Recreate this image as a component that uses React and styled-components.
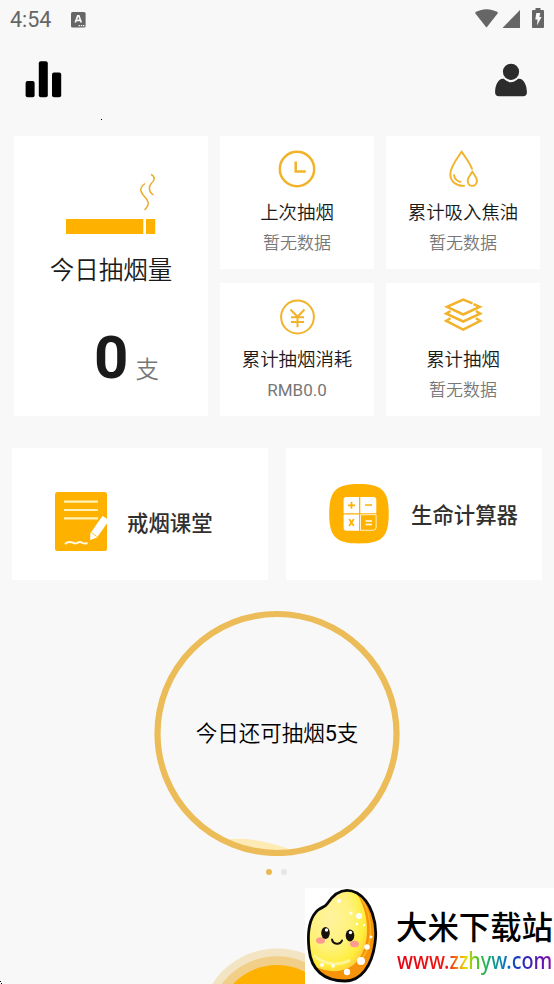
import React from 'react'
import styled, { createGlobalStyle } from 'styled-components'

const GlobalStyle = createGlobalStyle`
* { box-sizing: border-box; }
body {
  margin: 0;
  background-color: #f8f8f8;
  font-family: Roboto, "Noto Sans CJK SC", sans-serif;
}
svg { display: block; flex: none; }
`

const Page = styled.div`
position: relative;
display: flex;
flex-direction: column;
width: 554px;
height: 984px;
overflow: hidden;
background-color: #f8f8f8;
`

const StatusBar = styled.div`
display: flex;
align-items: flex-start;
justify-content: space-between;
height: 40px;
padding: 7px 9px 0 10px;
flex: none;
`

const StatusLeft = styled.div`
display: flex;
align-items: center;
gap: 20px;
`

const Time = styled.span`
padding-top: 1px;
font-size: 21.5px;
line-height: 24px;
color: #666;
`

const Header = styled.div`
display: flex;
justify-content: space-between;
height: 96px;
padding: 21px 27px 0 25px;
flex: none;
`

const Stats = styled.div`
display: grid;
grid-template-columns: 194px 154px 154px;
grid-template-rows: 133px 133px;
column-gap: 12px;
row-gap: 14px;
padding: 0 14px;
flex: none;
`

const TodayCard = styled.div`
grid-row: span 2;
display: flex;
flex-direction: column;
align-items: center;
padding-top: 37px;
background-color: #fff;
`

const TodayTitle = styled.div`
margin-top: 19px;
font-size: 24.5px;
line-height: 34px;
color: #1a1a1a;
font-weight: 350;
`

const TodayCount = styled.div`
display: flex;
align-items: baseline;
margin: 34px 0 0 31px;
`

const Count = styled.span`
font-size: 60px;
line-height: 72px;
font-weight: 700;
color: #1a1a1a;
`

const Unit = styled.span`
margin-left: 7px;
font-size: 23.5px;
line-height: 30px;
font-weight: 350;
color: #777;
`

const StatCard = styled.div`
display: flex;
flex-direction: column;
align-items: center;
padding-top: 13px;
background-color: #fff;
`

const StatTitle = styled.div`
margin-top: 10px;
font-size: 18.4px;
line-height: 28px;
font-weight: 350;
color: #1a1a1a;
`

const StatValue = styled.div`
margin-top: 3px;
font-size: 17px;
line-height: 26px;
font-weight: ${props => (props.$latin ? 400 : 350)};
color: #777;
`

const Links = styled.div`
display: flex;
gap: 18px;
margin-top: 32px;
padding: 0 12px;
flex: none;
`

const LinkCard = styled.div`
display: flex;
align-items: center;
gap: ${props => props.$gap}px;
width: 256px;
height: 132px;
padding: ${props => props.$padding};
background-color: #fff;
`

const LinkText = styled.span`
padding-top: 4px;
font-size: 21.4px;
line-height: 30px;
font-weight: 500;
white-space: nowrap;
color: #303030;
`

const Quota = styled.div`
display: flex;
flex-direction: column;
align-items: center;
margin-top: 30px;
flex: none;
`

const Ring = styled.div`
position: relative;
display: flex;
align-items: center;
justify-content: center;
width: 246px;
height: 246px;
`

const Wave = styled.svg`
position: absolute;
top: 0;
left: 0;
`

const QuotaText = styled.span`
position: relative;
padding-top: 1px;
font-size: 21.5px;
line-height: 30px;
font-weight: 350;
color: #000;
`

const QuotaNumber = styled.span`
font-weight: 400;
`

const Dots = styled.div`
display: flex;
gap: 9px;
margin: 13px 1px 0 0;
`

const Dot = styled.span`
width: 6px;
height: 6px;
border-radius: 50%;
background-color: ${props => (props.$active ? '#e9b94f' : '#e6e6e6')};
`

const SmokeButton = styled.svg`
position: absolute;
left: 200px;
bottom: 0;
`

const Speck = styled.span`
position: absolute;
left: ${props => props.$x}px;
top: ${props => props.$y}px;
width: 1px;
height: 1px;
background-color: #000;
`

const Badge = styled.div`
position: absolute;
right: 0;
bottom: 0;
display: flex;
width: 249px;
height: 96px;
padding-left: 1px;
background-color: #fff;
`

const BadgeBody = styled.div`
display: flex;
flex-direction: column;
margin-left: 15px;
padding-top: 19px;
white-space: nowrap;
`

const BadgeName = styled.span`
font-family: "Noto Sans CJK SC", sans-serif;
font-size: 31.4px;
line-height: 38px;
font-weight: 500;
color: #000;
`

const BadgeUrl = styled.span`
align-self: flex-start;
margin-left: 1px;
font-family: "Noto Sans", sans-serif;
font-size: 23px;
line-height: 30px;
font-weight: 500;
transform: scaleX(.86);
transform-origin: left center;
color: transparent;
background: linear-gradient(90deg, #e60012 0%, #ee1c10 33%, #f58a10 39%, #e8d800 44%, #55c81e 51%, #10a878 60%, #0a70c8 70%, #1830c0 79%, #5a18b0 90%, #8a10b0 100%);
background-clip: text;
-webkit-background-clip: text;
`

const InputIcon = () => (
  <svg width="15" height="16" viewBox="0 0 15 16">
    <rect width="14.6" height="15.6" rx="1.6" fill="#666" />
    <path d="M4.300 10.500 6.700 3.800h1.200l2.400 6.700M5.300 8.300h4" fill="none" stroke="#f8f8f8" strokeWidth="1.700" />
    <path d="M7.600 13.600h6" stroke="#f8f8f8" strokeWidth="1.300" strokeDasharray="1.400 .8" />
  </svg>
)

const SignalIcons = () => (
  <svg width="70" height="22" viewBox="475 7 70 22">
    <g fill="#666">
      <path d="M474.800 12.800C481 7.900 492 7.900 498.200 12.800L487 27Q486.500 27.400 486 27Z" />
      <path d="M520 10V28H502.500Z" />
      <path d="M535.500 8h5v2h2.500q1 0 1 1v16q0 1-1 1h-10q-1 0-1-1V11q0-1 1-1h2.500z" />
    </g>
    <path d="M536.300 13h4l-.9 4h2.200l-4.600 8.500.5-6h-2.200z" fill="#f8f8f8" />
  </svg>
)

const ChartIcon = () => (
  <svg width="37" height="37" viewBox="25 61 37 37">
    <rect x="25.600" y="81" width="9" height="16.200" rx="2" />
    <rect x="38.800" y="61.200" width="9" height="36" rx="2" />
    <rect x="52" y="72.400" width="9.200" height="24.800" rx="2" />
  </svg>
)

const UserIcon = () => (
  <svg width="32" height="37" viewBox="495 61 32 37" fill="#2c2c2c">
    <path d="M503 78.700c1.300 0 1.800.6 2.800 1.600q5.200 4 10.400 0c1-1 1.500-1.600 2.800-1.600 5.300 0 7.900 7.300 7.900 13.600q0 3.900-3.900 3.900h-24q-3.900 0-3.900-3.900c0-6.300 2.600-13.600 7.900-13.600z" />
    <circle cx="511" cy="72" r="9.600" fill="#f8f8f8" />
    <circle cx="511" cy="71.800" r="8.100" />
  </svg>
)

const CigaretteIcon = () => (
  <svg width="90" height="62" viewBox="66 173 90 62">
    <path d="M66 219h77.300v15H66zM146 219h9.200v15H146z" fill="#ffb100" />
    <g fill="none" stroke="#e9ad2c" strokeWidth="1.500">
      <path d="M145 183.500c-6 4.500-5 8-1 12.500 5 5.500 6 8.500.6 14" />
      <path d="M151 174.300c5 2.500 3.500 6.200.2 9.200-2.500 2.600-3 8.500 2.300 11.300" />
    </g>
  </svg>
)

const ClockIcon = () => (
  <svg width="40" height="40" viewBox="277 149 40 40" fill="none" stroke="#f2b22a" strokeWidth="2.500">
    <circle cx="297" cy="169" r="17.200" />
    <path d="M295.700 161.500v10h10" />
  </svg>
)

const DropIcon = () => (
  <svg width="40" height="40" viewBox="443 149 40 40" fill="none" stroke="#f2b22a" strokeWidth="1.900">
    <path d="M472.200 169.500C470 163 465 157 461.700 151.700 457 158.500 450.300 167 450.300 174c0 7.500 6 12.500 14.500 11.800" />
    <path d="M453.800 174.300c.7 4.500 3.700 7.200 7.300 7.700" />
    <path d="M472.300 171.800c-2 3-4.600 6-4.600 9 0 6.800 9.200 6.800 9.200 0 0-3-2.600-6-4.600-9z" />
  </svg>
)

const YuanIcon = () => (
  <svg width="40" height="40" viewBox="277 296 40 40" fill="none" stroke="#f2b22a" strokeWidth="2">
    <circle cx="297.500" cy="317" r="16.400" />
    <path d="M290.500 309.500l7 7.300 7-7.300M291 317.300h13M291 322h13M297.500 316.500v10.700" />
  </svg>
)

const LayersIcon = () => (
  <svg width="40" height="40" viewBox="443 296 40 40" fill="none" stroke="#f2b22a" strokeWidth="2.500">
    <path d="M472.500 303.300l-9.300-3.800-16.200 7.300 16.200 7.700 16.500-7.700-6.200-2.600" />
    <path d="M450.500 311l-4.300 2.600 17 7.900 17-7.900-4.300-2.600" />
    <path d="M450.500 318.200l-4.300 2.600 17 8.700 17-8.700-4.300-2.600" />
  </svg>
)

const NoteIcon = () => (
  <svg width="54" height="60" viewBox="55 492 54 60">
    <rect x="55" y="492" width="52" height="59" rx="2.500" fill="#ffb100" />
    <path d="M64 501.700h34M64 510h34M64 518.300h34" stroke="#fff2b8" strokeWidth="2.200" />
    <path d="M90.300 533.500l11.500-16.800q.7-1 1.700-.3l4.500 3.200q1 .8.300 1.800L97 537.500l-6.800 2.600z" fill="#fff" />
    <path d="M91.500 532.500l5.600 4.200" stroke="#ffb100" strokeWidth=".8" />
    <path d="M65 544c4-4 7-1.500 9.500-.7s4-2 6.500-1 3 2 6.500.7" fill="none" stroke="#fff8dc" strokeWidth="2" />
  </svg>
)

const CalculatorIcon = () => (
  <svg width="60" height="60" viewBox="329 484 60 60">
    <path d="M359 484c23 0 29.700 6.500 29.700 29.800S382 543.500 359 543.500 329.200 537 329.200 513.800 336 484 359 484z" fill="#ffb100" />
    <path d="M346.500 497H359v16.200h-15.400V500q0-3 2.900-3zM360.300 497h13q3 0 3 3v13.200h-16zM343.600 514.500H359v16.200h-12.500q-2.900 0-2.900-3z" fill="#fff" />
    <path d="M360.500 514.700h15.600v12.600q0 3-3 3h-12.600z" fill="none" stroke="#fff" strokeWidth=".8" />
    <path d="M348 505.300h7M351.500 501.800v7M365 505h7M349.200 519l4.600 7M353.800 519l-4.600 7" stroke="#ffb100" strokeWidth="1.700" />
    <path d="M365.500 521h6.500M365.500 524.500h6.500" stroke="#fff" strokeWidth="1.500" />
  </svg>
)

const RiceIcon = () => (
  <svg width="75" height="96" viewBox="0 0 75 96">
    <defs>
      <radialGradient id="rice" cx=".4" cy=".38" r=".65">
        <stop offset="0" stopColor="#fff3a0" />
        <stop offset=".55" stopColor="#fff27a" />
        <stop offset=".85" stopColor="#ffee3c" />
        <stop offset="1" stopColor="#ffd43c" />
      </radialGradient>
      <clipPath id="grain">
        <path d="M21 16C29 4 39-1 51 5c14 8 21 30 18 50-3 23-14 38-30 38C18 93 5 82 3 61 1 42 4 29 12 22c4-3 7-3 9-6z" />
      </clipPath>
    </defs>
    <g clipPath="url(#grain)">
      <path d="M0 0h75v96H0z" fill="#f6930b" />
      <path d="M44-3C66 20 65 58 51 73 40 87 17 86 0 73V0z" fill="url(#rice)" />
      <path d="M49 3c17 16 21 48 7 68" fill="none" stroke="#ffb51e" strokeWidth="1.500" />
      <path d="M8 67c9 10 25 11 36 5" fill="none" stroke="#fff59a" strokeWidth="3" />
      <g fill="#fff">
        <circle cx="53" cy="28" r="3" />
        <circle cx="51" cy="36" r="1.300" />
        <circle cx="58" cy="37" r="1.200" />
        <circle cx="45" cy="25" r="1.500" />
        <circle cx="61" cy="59" r="2.800" />
        <circle cx="55" cy="73" r="4" />
        <circle cx="41" cy="84" r="3.200" />
        <circle cx="27" cy="78" r="1.800" />
        <circle cx="16" cy="77" r="2" />
        <circle cx="65" cy="49" r="1.400" />
        <circle cx="33" cy="13" r="2" />
      </g>
    </g>
    <path d="M21 16C29 4 39-1 51 5c14 8 21 30 18 50-3 23-14 38-30 38C18 93 5 82 3 61 1 42 4 29 12 22c4-3 7-3 9-6z" fill="none" stroke="#080808" strokeWidth="2.800" />
    <ellipse cx="14.500" cy="52.500" rx="4.500" ry="3.200" fill="#ff9b91" />
    <ellipse cx="48.500" cy="56" rx="4.500" ry="3.200" fill="#ff9b91" />
    <ellipse cx="19.500" cy="45" rx="4.300" ry="6" fill="#17110c" />
    <ellipse cx="44" cy="47.500" rx="4.300" ry="6" fill="#17110c" />
    <circle cx="20.500" cy="42" r="1.700" fill="#fff" />
    <circle cx="44.500" cy="44.500" r="1.700" fill="#fff" />
    <path d="M26 51.500c1 5 8 6 10 1" fill="none" stroke="#17110c" strokeWidth="2" strokeLinecap="round" />
  </svg>
)

const stats = [
  { title: '上次抽烟', value: '暂无数据', icon: <ClockIcon /> },
  { title: '累计吸入焦油', value: '暂无数据', icon: <DropIcon /> },
  { title: '累计抽烟消耗', value: 'RMB0.0', icon: <YuanIcon />, latin: true },
  { title: '累计抽烟', value: '暂无数据', icon: <LayersIcon /> },
]

const App = () => {
  return (
    <>
      <GlobalStyle />
      <Page>
        <StatusBar>
          <StatusLeft>
            <Time>4:54</Time>
            <InputIcon />
          </StatusLeft>
          <SignalIcons />
        </StatusBar>
        <Header>
          <ChartIcon />
          <UserIcon />
        </Header>
        <Stats>
          <TodayCard>
            <CigaretteIcon />
            <TodayTitle>今日抽烟量</TodayTitle>
            <TodayCount>
              <Count>0</Count>
              <Unit>支</Unit>
            </TodayCount>
          </TodayCard>
          {stats.map(item => (
            <StatCard key={item.title}>
              {item.icon}
              <StatTitle>{item.title}</StatTitle>
              <StatValue $latin={item.latin}>{item.value}</StatValue>
            </StatCard>
          ))}
        </Stats>
        <Links>
          <LinkCard $gap={18} $padding="16px 0 0 43px">
            <NoteIcon />
            <LinkText>戒烟课堂</LinkText>
          </LinkCard>
          <LinkCard $gap={22} $padding="0 0 0 43px">
            <CalculatorIcon />
            <LinkText>生命计算器</LinkText>
          </LinkCard>
        </Links>
        <Quota>
          <Ring>
            <Wave width="246" height="246" viewBox="0 0 246 246">
              <path d="M72 230Q96 225 138 240L123 244z" fill="#fdeab5" />
              <circle cx="123" cy="123.500" r="119.500" fill="none" stroke="#ebbc57" strokeWidth="6.200" />
            </Wave>
            <QuotaText>今日还可抽烟<QuotaNumber>5</QuotaNumber>支</QuotaText>
          </Ring>
          <Dots>
            <Dot $active />
            <Dot />
          </Dots>
        </Quota>
        <SmokeButton width="154" height="36" viewBox="200 948 154 36">
          <circle cx="277" cy="1025.500" r="77" fill="#f3e5c4" />
          <circle cx="277" cy="1025" r="68.800" fill="#f2cf88" />
          <circle cx="277" cy="1025" r="60" fill="#ffb100" />
        </SmokeButton>
        <Speck $x={101} $y={119} />
        <Speck $x={0} $y={981} />
        <Speck $x={1} $y={983} />
        <Badge>
          <RiceIcon />
          <BadgeBody>
            <BadgeName>大米下载站</BadgeName>
            <BadgeUrl>www.zzhyw.com</BadgeUrl>
          </BadgeBody>
        </Badge>
      </Page>
    </>
  )
}

export default App
